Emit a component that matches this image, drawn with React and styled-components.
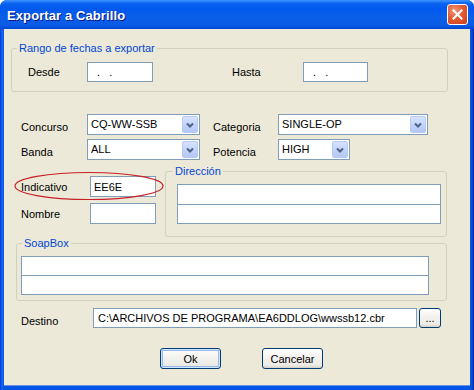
import React from "react";
import styled, { createGlobalStyle } from "styled-components";

const GlobalStyle = createGlobalStyle`
  html, body {
    margin: 0;
    padding: 0;
    background: #ffffff;
  }
  body {
    font-family: "Liberation Sans", Arial, sans-serif;
    font-size: 11px;
  }
`;

const Chevron = () => (
  <svg width="8" height="6" viewBox="0 0 8 6">
    <polyline points="1,1.5 4,4.5 7,1.5" fill="none" stroke="#4d6185" strokeWidth="2" />
  </svg>
);

const CloseIcon = () => (
  <svg width="11" height="11" viewBox="0 0 11 11">
    <path d="M1.5 1.5 L9.5 9.5 M9.5 1.5 L1.5 9.5" stroke="#ffffff" strokeWidth="2" strokeLinecap="square" />
  </svg>
);

const App = () => {
  return (
    <>
      <GlobalStyle />
      <Window>
        <TitleBar>
          <Title>Exportar a Cabrillo</Title>
          <CloseButton>
            <CloseIcon />
          </CloseButton>
        </TitleBar>
        <Body>
          <GroupBox $w={437} $ml={7} $mt={13} $pad="7px 0 9px 16px">
            <Legend $ml={-11}>Rango de fechas a exportar</Legend>
            <Row>
              <Label $w={59}>Desde</Label>
              <TextBox $w={66} $h={20} readOnly value=".   ." $indent={9} />
              <Label $w={79} />
              <Label $w={71}>Hasta</Label>
              <TextBox $w={65} $h={20} readOnly value=".   ." $indent={9} />
            </Row>
          </GroupBox>

          <ComboRows>
            <Row>
              <Label $w={66} $dy={2}>Concurso</Label>
              <Combo $w={113}>
                <ComboValue>CQ-WW-SSB</ComboValue>
                <DropButton>
                  <Chevron />
                </DropButton>
              </Combo>
              <Label $w={13} />
              <Label $w={65} $dy={2}>Categoria</Label>
              <Combo $w={150}>
                <ComboValue>SINGLE-OP</ComboValue>
                <DropButton>
                  <Chevron />
                </DropButton>
              </Combo>
            </Row>
            <Row>
              <Label $w={66} $dy={2}>Banda</Label>
              <Combo $w={113}>
                <ComboValue>ALL</ComboValue>
                <DropButton>
                  <Chevron />
                </DropButton>
              </Combo>
              <Label $w={13} />
              <Label $w={65} $dy={2}>Potencia</Label>
              <Combo $w={72}>
                <ComboValue>HIGH</ComboValue>
                <DropButton>
                  <Chevron />
                </DropButton>
              </Combo>
            </Row>
          </ComboRows>

          <Lower>
            <StationColumn>
              <Row>
                <Label $w={69}>Indicativo</Label>
                <TextBox $w={66} $h={21} readOnly value="EE6E" $indent={3} />
              </Row>
              <Row>
                <Label $w={69}>Nombre</Label>
                <TextBox $w={66} $h={21} readOnly value="" $indent={3} />
              </Row>
              <Highlight width="150" height="30" viewBox="0 0 150 30">
                <ellipse cx="75" cy="15" rx="74" ry="13.5" fill="none" stroke="#c8202a" strokeWidth="1.2" />
              </Highlight>
            </StationColumn>
            <GroupBox $w={282} $ml={0} $mt={0} $pad="6px 0 12px 11px">
              <Legend $ml={-4}>Dirección</Legend>
              <Stack>
                <TextBox $w={264} $h={21} readOnly value="" $indent={3} />
                <TextBox $w={264} $h={20} readOnly value="" $indent={3} />
              </Stack>
            </GroupBox>
          </Lower>

          <GroupBox $w={431} $ml={12} $mt={0} $pad="6px 0 5px 4px">
            <Legend $ml={1}>SoapBox</Legend>
            <Stack>
              <TextBox $w={408} $h={20} readOnly value="" $indent={3} />
              <TextBox $w={408} $h={20} readOnly value="" $indent={3} />
            </Stack>
          </GroupBox>

          <DestRow>
            <Label $w={70} $dy={3}>Destino</Label>
            <TextBox $w={324} $h={20} readOnly value="C:\ARCHIVOS DE PROGRAMA\EA6DDLOG\wwssb12.cbr" $indent={4} />
            <XpButton $w={22} $h={20}>...</XpButton>
          </DestRow>

          <Actions>
            <XpButton $w={61} $h={21} $default>Ok</XpButton>
            <XpButton $w={61} $h={21}>Cancelar</XpButton>
          </Actions>
        </Body>
      </Window>
    </>
  );
};

const Window = styled.div`
  width: 474px;
  height: 390px;
  display: flex;
  flex-direction: column;
  background: linear-gradient(to right, #0831d9 0px, #166aee 2px, #0055e5 4px, #0055e5 470px, #0a4bd8 472px, #001ea0 474px);
  border-radius: 7px 7px 0 0;
  overflow: hidden;
`;

const TitleBar = styled.div`
  height: 29px;
  flex: none;
  display: flex;
  align-items: center;
  justify-content: space-between;
  padding: 0 6px 0 7px;
  box-sizing: border-box;
  background: linear-gradient(
    to bottom,
    #3d95ff 0%,
    #0a62f0 12%,
    #0058ee 30%,
    #0b5fe8 60%,
    #0a5ae6 88%,
    #0046d0 100%
  );
`;

const Title = styled.div`
  color: #ffffff;
  font-family: "Liberation Sans", Arial, sans-serif;
  font-weight: bold;
  font-size: 13px;
  letter-spacing: 0.1px;
  text-shadow: 1px 1px 0 #0a1883;
  margin-top: 1px;
`;

const CloseButton = styled.div`
  width: 21px;
  height: 21px;
  box-sizing: border-box;
  border: 1px solid #ffffff;
  border-radius: 3px;
  display: flex;
  align-items: center;
  justify-content: center;
  background: radial-gradient(circle at 35% 30%, #f19a7c 0%, #e15b34 45%, #c8401d 100%);
`;

const Body = styled.div`
  flex: 1;
  margin: 0 4px 5px 4px;
  background: #ece9d8;
  display: flex;
  flex-direction: column;
  box-shadow: 0 1px 0 #6f8fe8;
`;

const GroupBox = styled.fieldset`
  width: ${(p) => p.$w}px;
  margin: ${(p) => p.$mt}px 0 0 ${(p) => p.$ml}px;
  padding: ${(p) => p.$pad};
  box-sizing: border-box;
  border: 1px solid #d0d0bf;
  border-radius: 3px;
  min-width: 0;
  flex: none;
`;

const Legend = styled.legend`
  margin-left: ${(p) => p.$ml}px;
  padding: 0 2px;
  font-size: 11px;
  line-height: 13px;
  color: #0046d5;
`;

const Row = styled.div`
  display: flex;
  align-items: center;
`;

const Label = styled.div`
  width: ${(p) => p.$w}px;
  flex: none;
  box-sizing: border-box;
  padding-top: ${(p) => (p.$dy || 0) * 2}px;
  color: #000000;
  font-size: 11px;
  white-space: nowrap;
`;

const TextBox = styled.input`
  width: ${(p) => p.$w}px;
  height: ${(p) => p.$h}px;
  flex: none;
  box-sizing: border-box;
  margin: 0;
  padding: 0 0 0 ${(p) => p.$indent}px;
  border: 1px solid #7f9db9;
  background: #ffffff;
  font-family: "Liberation Sans", Arial, sans-serif;
  font-size: 11px;
  color: #000000;
  outline: none;
`;

const Stack = styled.div`
  display: flex;
  flex-direction: column;

  & > input + input {
    margin-top: -1px;
  }
`;

const ComboRows = styled.div`
  display: flex;
  flex-direction: column;
  gap: 4px;
  margin: 22px 0 0 17px;
`;

const Combo = styled.div`
  width: ${(p) => p.$w}px;
  height: 21px;
  box-sizing: border-box;
  border: 1px solid #7f9db9;
  background: #ffffff;
  display: flex;
  align-items: stretch;
  padding: 1px;
`;

const ComboValue = styled.div`
  flex: 1;
  padding: 1px 0 0 2px;
  font-size: 11px;
  line-height: 15px;
  color: #000000;
  white-space: nowrap;
`;

const DropButton = styled.div`
  width: 16px;
  box-sizing: border-box;
  border: 1px solid #b9caf0;
  border-radius: 2px;
  background: linear-gradient(to bottom, #d6e2fe 0%, #c3d4fc 50%, #b4c8f6 100%);
  display: flex;
  align-items: center;
  justify-content: center;
`;

const Lower = styled.div`
  display: flex;
  margin-top: 5px;
`;

const StationColumn = styled.div`
  position: relative;
  width: 161px;
  flex: none;
  box-sizing: border-box;
  padding: 11px 0 0 17px;
  display: flex;
  flex-direction: column;
  gap: 6px;
`;

const Highlight = styled.svg`
  position: absolute;
  left: 10px;
  top: 6px;
  pointer-events: none;
`;

const DestRow = styled.div`
  display: flex;
  align-items: center;
  gap: 2px;
  margin: 7px 0 0 17px;
`;

const XpButton = styled.div`
  width: ${(p) => p.$w}px;
  height: ${(p) => p.$h}px;
  box-sizing: border-box;
  border: 1px solid #003c74;
  border-radius: 3px;
  background: linear-gradient(to bottom, #ffffff 0%, #f4f3ee 40%, #ecebe6 85%, #d6d0c5 100%);
  box-shadow: ${(p) => (p.$default ? "inset 0 0 0 1px #cee7ff, inset 0 0 0 2px #98b8ea" : "none")};
  display: flex;
  align-items: center;
  justify-content: center;
  font-size: 11px;
  color: #000000;
`;

const Actions = styled.div`
  display: flex;
  gap: 41px;
  margin: 20px 0 0 156px;
`;

export default App;
